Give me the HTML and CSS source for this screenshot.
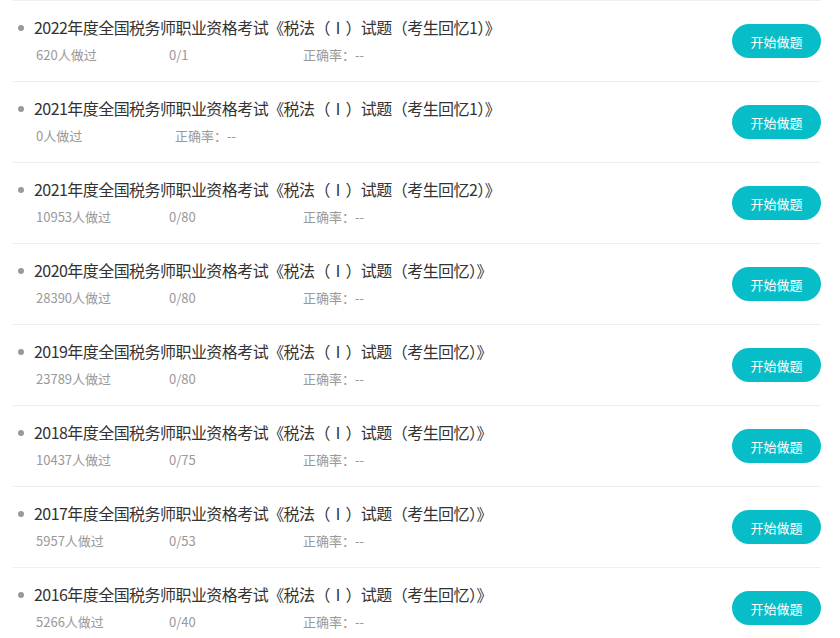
FILE: index.html
```html
<!DOCTYPE html>
<html lang="zh-CN">
<head>
  <meta charset="UTF-8" />
  <title>税法（Ⅰ）历年真题</title>
  <meta name="viewport" content="width=device-width, initial-scale=1.0" />
  <link rel="stylesheet" href="styles.css">
</head>
<body>

  <!-- 试卷列表 -->
  <ul class="paper-list">
    <li class="paper">
      <div class="info">
        <p class="title">2022年度全国税务师职业资格考试《税法（Ⅰ）试题（考生回忆1）》</p>
        <p class="meta"><span class="count">620人做过</span><span class="done">0/1</span><span>正确率：--</span></p>
      </div>
      <button class="start">开始做题</button>
    </li>
    <li class="paper">
      <div class="info">
        <p class="title">2021年度全国税务师职业资格考试《税法（Ⅰ）试题（考生回忆1）》</p>
        <p class="meta"><span class="count wide">0人做过</span><span>正确率：--</span></p>
      </div>
      <button class="start">开始做题</button>
    </li>
    <li class="paper">
      <div class="info">
        <p class="title">2021年度全国税务师职业资格考试《税法（Ⅰ）试题（考生回忆2）》</p>
        <p class="meta"><span class="count">10953人做过</span><span class="done">0/80</span><span>正确率：--</span></p>
      </div>
      <button class="start">开始做题</button>
    </li>
    <li class="paper">
      <div class="info">
        <p class="title">2020年度全国税务师职业资格考试《税法（Ⅰ）试题（考生回忆）》</p>
        <p class="meta"><span class="count">28390人做过</span><span class="done">0/80</span><span>正确率：--</span></p>
      </div>
      <button class="start">开始做题</button>
    </li>
    <li class="paper">
      <div class="info">
        <p class="title">2019年度全国税务师职业资格考试《税法（Ⅰ）试题（考生回忆）》</p>
        <p class="meta"><span class="count">23789人做过</span><span class="done">0/80</span><span>正确率：--</span></p>
      </div>
      <button class="start">开始做题</button>
    </li>
    <li class="paper">
      <div class="info">
        <p class="title">2018年度全国税务师职业资格考试《税法（Ⅰ）试题（考生回忆）》</p>
        <p class="meta"><span class="count">10437人做过</span><span class="done">0/75</span><span>正确率：--</span></p>
      </div>
      <button class="start">开始做题</button>
    </li>
    <li class="paper">
      <div class="info">
        <p class="title">2017年度全国税务师职业资格考试《税法（Ⅰ）试题（考生回忆）》</p>
        <p class="meta"><span class="count">5957人做过</span><span class="done">0/53</span><span>正确率：--</span></p>
      </div>
      <button class="start">开始做题</button>
    </li>
    <li class="paper">
      <div class="info">
        <p class="title">2016年度全国税务师职业资格考试《税法（Ⅰ）试题（考生回忆）》</p>
        <p class="meta"><span class="count">5266人做过</span><span class="done">0/40</span><span>正确率：--</span></p>
      </div>
      <button class="start">开始做题</button>
    </li>
  </ul>

</body>
</html>
```

FILE: styles.css
```css
body {
  font-family: "Noto Sans CJK SC", "Noto Sans", sans-serif;
  background: #fff;
  margin: 0;
  padding: 0;
}
.paper-list {
  list-style: none;
  margin: 0 0 0 13px;
  padding: 0;
  width: 808px;
  border-top: 1px solid #eee;
}
.paper {
  display: flex;
  align-items: center;
  justify-content: space-between;
  height: 80px;
  border-bottom: 1px solid #eee;
}
.info {
  padding: 0 0 3px 5px;
}
.title {
  display: flex;
  align-items: center;
  margin: 0;
  font-size: 16px;
  line-height: 24px;
  letter-spacing: -0.55px;
  color: #333;
}
.title::before {
  content: "";
  width: 6px;
  height: 6px;
  border-radius: 50%;
  background: #999;
  margin: 2px 10px 0 0;
  flex-shrink: 0;
}
.meta {
  margin: 6px 0 0 18px;
  font-size: 13px;
  line-height: 20px;
  color: #999;
}
.meta span {
  display: inline-block;
}
.count {
  width: 133px;
}
.count.wide {
  width: 139px;
}
.done {
  width: 134px;
}
.start {
  width: 89px;
  height: 34px;
  border: none;
  border-radius: 17px;
  background: #07bec8;
  color: #fff;
  font-family: inherit;
  font-size: 13px;
  cursor: pointer;
}
.start:hover {
  background: #05aab3;
}
```
